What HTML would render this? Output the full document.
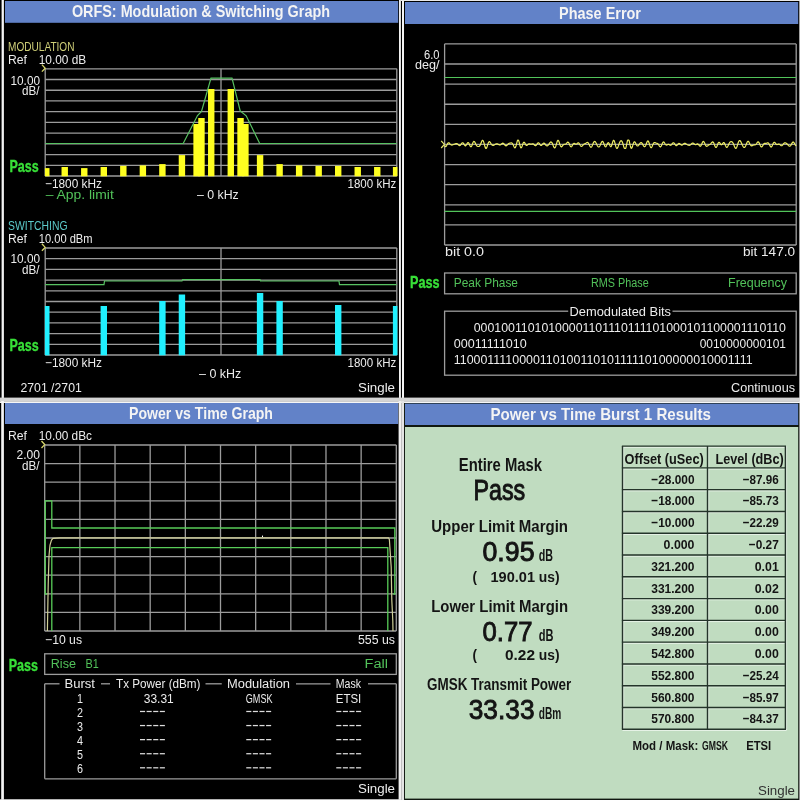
<!DOCTYPE html>
<html><head><meta charset="utf-8"><title>GSM Measurements</title>
<style>
html,body{margin:0;padding:0;background:#000;}
svg{display:block;will-change:transform;font-family:"Liberation Sans",sans-serif;}
text{white-space:pre;}
</style></head><body>
<svg width="800" height="800" viewBox="0 0 800 800">
<rect x="0.00" y="0.00" width="800.00" height="800.00" fill="#000"/>
<rect x="1.60" y="0.00" width="2.30" height="400.00" fill="#f4f4f4"/>
<rect x="5.00" y="1.00" width="393.20" height="21.80" fill="#6282c8"/>
<rect x="399.00" y="0.00" width="1.90" height="400.00" fill="#f0f0f0"/>
<rect x="0.00" y="397.60" width="401.00" height="3.60" fill="#d4d4d4"/>
<rect x="402.00" y="0.00" width="2.00" height="400.00" fill="#f4f4f4"/>
<rect x="401.00" y="0.00" width="399.00" height="1.00" fill="#e8e8e8"/>
<rect x="405.00" y="2.00" width="393.20" height="22.00" fill="#6282c8"/>
<rect x="799.30" y="0.00" width="0.70" height="400.00" fill="#e8e8e8"/>
<rect x="401.00" y="397.60" width="399.00" height="3.60" fill="#d4d4d4"/>
<rect x="1.20" y="401.00" width="2.70" height="399.00" fill="#f4f4f4"/>
<rect x="0.00" y="401.20" width="800.00" height="1.80" fill="#f6f6f6"/>
<rect x="5.00" y="403.00" width="393.20" height="21.00" fill="#6282c8"/>
<rect x="398.60" y="401.00" width="2.60" height="399.00" fill="#f0f0f0"/>
<rect x="0.00" y="799.20" width="401.00" height="0.80" fill="#e0e0e0"/>
<rect x="401.20" y="401.00" width="3.00" height="399.00" fill="#e4e4e4"/>
<rect x="404.20" y="403.00" width="395.00" height="397.00" fill="#101810"/>
<rect x="405.00" y="403.60" width="393.20" height="21.40" fill="#6282c8"/>
<rect x="405.00" y="427.00" width="393.20" height="371.60" fill="#c0dcc0"/>
<rect x="799.40" y="401.00" width="0.60" height="399.00" fill="#e8e8e8"/>
<text x="71.90" y="17.20" font-size="17.1" fill="#f4f4f4" font-weight="bold" textLength="258.10" lengthAdjust="spacingAndGlyphs" >ORFS: Modulation &amp; Switching Graph</text>
<text x="8.00" y="50.80" font-size="13" fill="#cfcf78" textLength="66.50" lengthAdjust="spacingAndGlyphs" >MODULATION</text>
<text x="8.00" y="64.00" font-size="12.3" fill="#ececec" textLength="19.00" lengthAdjust="spacingAndGlyphs" >Ref</text>
<text x="38.75" y="64.00" font-size="12.3" fill="#ececec" textLength="47.50" lengthAdjust="spacingAndGlyphs" >10.00 dB</text>
<text x="10.50" y="84.60" font-size="12.3" fill="#ececec" textLength="29.50" lengthAdjust="spacingAndGlyphs" >10.00</text>
<text x="22.00" y="95.00" font-size="12.3" fill="#ececec" textLength="17.50" lengthAdjust="spacingAndGlyphs" >dB/</text>
<line x1="45.20" y1="68.80" x2="396.80" y2="68.80" stroke="#9c9c9c" stroke-width="1.3"/>
<line x1="45.20" y1="79.52" x2="396.80" y2="79.52" stroke="#9c9c9c" stroke-width="1.3"/>
<line x1="45.20" y1="90.24" x2="396.80" y2="90.24" stroke="#9c9c9c" stroke-width="1.3"/>
<line x1="45.20" y1="100.96" x2="396.80" y2="100.96" stroke="#9c9c9c" stroke-width="1.3"/>
<line x1="45.20" y1="111.68" x2="396.80" y2="111.68" stroke="#9c9c9c" stroke-width="1.3"/>
<line x1="45.20" y1="122.40" x2="396.80" y2="122.40" stroke="#9c9c9c" stroke-width="1.3"/>
<line x1="45.20" y1="133.12" x2="396.80" y2="133.12" stroke="#9c9c9c" stroke-width="1.3"/>
<line x1="45.20" y1="143.84" x2="396.80" y2="143.84" stroke="#9c9c9c" stroke-width="1.3"/>
<line x1="45.20" y1="154.56" x2="396.80" y2="154.56" stroke="#9c9c9c" stroke-width="1.3"/>
<line x1="45.20" y1="165.28" x2="396.80" y2="165.28" stroke="#9c9c9c" stroke-width="1.3"/>
<line x1="45.20" y1="176.00" x2="396.80" y2="176.00" stroke="#9c9c9c" stroke-width="1.3"/>
<line x1="45.20" y1="68.80" x2="45.20" y2="176.00" stroke="#9c9c9c" stroke-width="1.3"/>
<line x1="396.80" y1="68.80" x2="396.80" y2="176.00" stroke="#9c9c9c" stroke-width="1.3"/>
<line x1="221.00" y1="68.80" x2="221.00" y2="176.00" stroke="#9c9c9c" stroke-width="1.3"/>
<rect x="208.03" y="89.00" width="6.40" height="87.30" fill="#ffff20"/>
<rect x="227.57" y="89.00" width="6.40" height="87.30" fill="#ffff20"/>
<rect x="198.27" y="118.00" width="6.40" height="58.30" fill="#ffff20"/>
<rect x="237.33" y="118.00" width="6.40" height="58.30" fill="#ffff20"/>
<rect x="193.38" y="124.00" width="6.40" height="52.30" fill="#ffff20"/>
<rect x="242.22" y="124.00" width="6.40" height="52.30" fill="#ffff20"/>
<rect x="178.73" y="155.10" width="6.40" height="21.20" fill="#ffff20"/>
<rect x="256.87" y="155.10" width="6.40" height="21.20" fill="#ffff20"/>
<rect x="159.20" y="164.10" width="6.40" height="12.20" fill="#ffff20"/>
<rect x="276.40" y="164.10" width="6.40" height="12.20" fill="#ffff20"/>
<rect x="139.67" y="165.40" width="6.40" height="10.90" fill="#ffff20"/>
<rect x="295.93" y="165.40" width="6.40" height="10.90" fill="#ffff20"/>
<rect x="120.13" y="165.90" width="6.40" height="10.40" fill="#ffff20"/>
<rect x="315.47" y="165.90" width="6.40" height="10.40" fill="#ffff20"/>
<rect x="100.60" y="167.00" width="6.40" height="9.30" fill="#ffff20"/>
<rect x="335.00" y="165.90" width="6.40" height="10.40" fill="#ffff20"/>
<rect x="81.07" y="168.10" width="6.40" height="8.20" fill="#ffff20"/>
<rect x="354.53" y="167.00" width="6.40" height="9.30" fill="#ffff20"/>
<rect x="61.53" y="167.00" width="6.40" height="9.30" fill="#ffff20"/>
<rect x="374.07" y="167.00" width="6.40" height="9.30" fill="#ffff20"/>
<rect x="44.90" y="168.10" width="4.60" height="8.20" fill="#ffff20"/>
<rect x="392.90" y="167.00" width="4.50" height="9.30" fill="#ffff20"/>
<path d="M45.2,143.5 L183.2,143.5 L197.5,115.6 L201.5,111.4 L211.0,78.2 L232.0,78.2 L240.2,111.0 L246.2,115.8 L259.7,143.5 L396.8,143.5" stroke="#58c262" stroke-width="1.2" fill="none" />
<path d="M41.9,64.6 L45.2,68.2 L41.9,71.6" stroke="#d6d66a" stroke-width="1.3" fill="none" />
<text x="9.50" y="172.00" font-size="16.5" fill="#38e038" font-weight="bold" textLength="29.25" lengthAdjust="spacingAndGlyphs" stroke="#38e038" stroke-width="0.35">Pass</text>
<text x="45.00" y="188.00" font-size="12.3" fill="#ececec" textLength="57.00" lengthAdjust="spacingAndGlyphs" >−1800 kHz</text>
<text x="347.50" y="188.00" font-size="12.3" fill="#ececec" textLength="48.75" lengthAdjust="spacingAndGlyphs" >1800 kHz</text>
<text x="45.75" y="198.60" font-size="12.3" fill="#52c25a" textLength="68.00" lengthAdjust="spacingAndGlyphs" >– App. limit</text>
<text x="197.00" y="198.80" font-size="12.3" fill="#ececec" textLength="41.75" lengthAdjust="spacingAndGlyphs" >– 0 kHz</text>
<text x="8.00" y="230.00" font-size="13" fill="#5ccaca" textLength="59.50" lengthAdjust="spacingAndGlyphs" >SWITCHING</text>
<text x="8.00" y="243.20" font-size="12.3" fill="#ececec" textLength="19.00" lengthAdjust="spacingAndGlyphs" >Ref</text>
<text x="38.75" y="243.20" font-size="12.3" fill="#ececec" textLength="53.75" lengthAdjust="spacingAndGlyphs" >10.00 dBm</text>
<text x="10.50" y="263.40" font-size="12.3" fill="#ececec" textLength="29.50" lengthAdjust="spacingAndGlyphs" >10.00</text>
<text x="22.00" y="274.00" font-size="12.3" fill="#ececec" textLength="17.50" lengthAdjust="spacingAndGlyphs" >dB/</text>
<line x1="45.20" y1="248.00" x2="396.80" y2="248.00" stroke="#9c9c9c" stroke-width="1.3"/>
<line x1="45.20" y1="258.70" x2="396.80" y2="258.70" stroke="#9c9c9c" stroke-width="1.3"/>
<line x1="45.20" y1="269.40" x2="396.80" y2="269.40" stroke="#9c9c9c" stroke-width="1.3"/>
<line x1="45.20" y1="280.10" x2="396.80" y2="280.10" stroke="#9c9c9c" stroke-width="1.3"/>
<line x1="45.20" y1="290.80" x2="396.80" y2="290.80" stroke="#9c9c9c" stroke-width="1.3"/>
<line x1="45.20" y1="301.50" x2="396.80" y2="301.50" stroke="#9c9c9c" stroke-width="1.3"/>
<line x1="45.20" y1="312.20" x2="396.80" y2="312.20" stroke="#9c9c9c" stroke-width="1.3"/>
<line x1="45.20" y1="322.90" x2="396.80" y2="322.90" stroke="#9c9c9c" stroke-width="1.3"/>
<line x1="45.20" y1="333.60" x2="396.80" y2="333.60" stroke="#9c9c9c" stroke-width="1.3"/>
<line x1="45.20" y1="344.30" x2="396.80" y2="344.30" stroke="#9c9c9c" stroke-width="1.3"/>
<line x1="45.20" y1="355.00" x2="396.80" y2="355.00" stroke="#9c9c9c" stroke-width="1.3"/>
<line x1="45.20" y1="248.00" x2="45.20" y2="355.00" stroke="#9c9c9c" stroke-width="1.3"/>
<line x1="396.80" y1="248.00" x2="396.80" y2="355.00" stroke="#9c9c9c" stroke-width="1.3"/>
<line x1="221.00" y1="248.00" x2="221.00" y2="355.00" stroke="#9c9c9c" stroke-width="1.3"/>
<rect x="178.73" y="294.50" width="6.40" height="60.80" fill="#20f0ff"/>
<rect x="256.87" y="293.00" width="6.40" height="62.30" fill="#20f0ff"/>
<rect x="159.20" y="301.00" width="6.40" height="54.30" fill="#20f0ff"/>
<rect x="276.40" y="301.00" width="6.40" height="54.30" fill="#20f0ff"/>
<rect x="100.60" y="306.00" width="6.40" height="49.30" fill="#20f0ff"/>
<rect x="335.00" y="305.00" width="6.40" height="50.30" fill="#20f0ff"/>
<rect x="44.90" y="306.00" width="4.60" height="49.30" fill="#20f0ff"/>
<rect x="392.90" y="306.00" width="4.50" height="49.30" fill="#20f0ff"/>
<path d="M45.2,284.6 L104.0,284.6 L104.5,281.0 L182.0,281.0 L182.5,279.6 L260.0,279.6 L260.5,281.0 L339.0,281.0 L339.5,284.6 L396.8,284.6" stroke="#58c262" stroke-width="1.2" fill="none" />
<path d="M41.9,243.8 L45.2,247.4 L41.9,250.8" stroke="#d6d66a" stroke-width="1.3" fill="none" />
<text x="9.50" y="350.50" font-size="16.5" fill="#38e038" font-weight="bold" textLength="29.25" lengthAdjust="spacingAndGlyphs" stroke="#38e038" stroke-width="0.35">Pass</text>
<text x="45.00" y="367.20" font-size="12.3" fill="#ececec" textLength="57.00" lengthAdjust="spacingAndGlyphs" >−1800 kHz</text>
<text x="347.50" y="367.20" font-size="12.3" fill="#ececec" textLength="48.75" lengthAdjust="spacingAndGlyphs" >1800 kHz</text>
<text x="199.00" y="378.20" font-size="12.3" fill="#ececec" textLength="42.25" lengthAdjust="spacingAndGlyphs" >– 0 kHz</text>
<text x="20.50" y="392.20" font-size="12.3" fill="#ececec" textLength="61.25" lengthAdjust="spacingAndGlyphs" >2701 /2701</text>
<text x="358.00" y="391.60" font-size="12.3" fill="#ececec" textLength="37.00" lengthAdjust="spacingAndGlyphs" >Single</text>
<text x="559.00" y="18.70" font-size="17.1" fill="#f4f4f4" font-weight="bold" textLength="82.00" lengthAdjust="spacingAndGlyphs" >Phase Error</text>
<line x1="444.60" y1="43.90" x2="796.20" y2="43.90" stroke="#9c9c9c" stroke-width="1.3"/>
<line x1="444.60" y1="64.01" x2="796.20" y2="64.01" stroke="#9c9c9c" stroke-width="1.3"/>
<line x1="444.60" y1="84.12" x2="796.20" y2="84.12" stroke="#9c9c9c" stroke-width="1.3"/>
<line x1="444.60" y1="104.23" x2="796.20" y2="104.23" stroke="#9c9c9c" stroke-width="1.3"/>
<line x1="444.60" y1="124.34" x2="796.20" y2="124.34" stroke="#9c9c9c" stroke-width="1.3"/>
<line x1="444.60" y1="144.45" x2="796.20" y2="144.45" stroke="#9c9c9c" stroke-width="1.3"/>
<line x1="444.60" y1="164.56" x2="796.20" y2="164.56" stroke="#9c9c9c" stroke-width="1.3"/>
<line x1="444.60" y1="184.67" x2="796.20" y2="184.67" stroke="#9c9c9c" stroke-width="1.3"/>
<line x1="444.60" y1="204.78" x2="796.20" y2="204.78" stroke="#9c9c9c" stroke-width="1.3"/>
<line x1="444.60" y1="224.89" x2="796.20" y2="224.89" stroke="#9c9c9c" stroke-width="1.3"/>
<line x1="444.60" y1="245.00" x2="796.20" y2="245.00" stroke="#9c9c9c" stroke-width="1.3"/>
<line x1="444.60" y1="43.90" x2="444.60" y2="245.00" stroke="#9c9c9c" stroke-width="1.3"/>
<line x1="796.20" y1="43.90" x2="796.20" y2="245.00" stroke="#9c9c9c" stroke-width="1.3"/>
<line x1="444.60" y1="77.50" x2="796.20" y2="77.50" stroke="#52c45a" stroke-width="1.2"/>
<line x1="444.60" y1="211.30" x2="796.20" y2="211.30" stroke="#52c45a" stroke-width="1.2"/>
<path d="M444.6,145.68 L445.0,146.27 L445.4,146.58 L445.8,146.57 L446.2,146.20 L446.6,145.57 L447.0,144.80 L447.4,144.02 L447.8,143.35 L448.2,142.91 L448.6,142.73 L449.0,142.82 L449.4,143.13 L449.8,143.57 L450.2,144.06 L450.6,144.50 L451.0,144.83 L451.4,145.02 L451.8,145.08 L452.2,145.02 L452.6,144.89 L453.0,144.73 L453.4,144.56 L453.8,144.39 L454.2,144.24 L454.6,144.09 L455.0,143.94 L455.4,143.79 L455.8,143.66 L456.2,143.58 L456.6,143.57 L457.0,143.67 L457.4,143.89 L457.8,144.22 L458.2,144.61 L458.6,145.01 L459.0,145.35 L459.4,145.56 L459.8,145.57 L460.2,145.36 L460.6,144.96 L461.0,144.41 L461.4,143.81 L461.8,143.26 L462.2,142.88 L462.6,142.74 L463.0,142.88 L463.4,143.29 L463.8,143.89 L464.2,144.58 L464.6,145.21 L465.0,145.66 L465.4,145.83 L465.8,145.67 L466.2,145.21 L466.6,144.53 L467.0,143.77 L467.4,143.10 L467.8,142.67 L468.2,142.58 L468.6,142.88 L469.0,143.53 L469.4,144.40 L469.8,145.34 L470.2,146.15 L470.6,146.67 L471.0,146.77 L471.4,146.44 L471.8,145.70 L472.2,144.70 L472.6,143.60 L473.0,142.59 L473.4,141.84 L473.8,141.46 L474.2,141.48 L474.6,141.88 L475.0,142.55 L475.4,143.36 L475.8,144.20 L476.2,144.95 L476.6,145.54 L477.0,145.97 L477.4,146.25 L477.8,146.41 L478.2,146.49 L478.6,146.50 L479.0,146.41 L479.4,146.20 L479.8,145.79 L480.2,145.18 L480.6,144.34 L481.0,143.33 L481.4,142.27 L481.8,141.30 L482.2,140.58 L482.6,140.27 L483.0,140.46 L483.4,141.17 L483.8,142.34 L484.2,143.81 L484.6,145.37 L485.0,146.80 L485.4,147.87 L485.8,148.45 L486.2,148.45 L486.6,147.91 L487.0,146.92 L487.4,145.68 L487.8,144.37 L488.2,143.18 L488.6,142.28 L489.0,141.75 L489.4,141.61 L489.8,141.82 L490.2,142.30 L490.6,142.94 L491.0,143.62 L491.4,144.25 L491.8,144.77 L492.2,145.13 L492.6,145.33 L493.0,145.39 L493.4,145.33 L493.8,145.18 L494.2,144.99 L494.6,144.75 L495.0,144.51 L495.4,144.27 L495.8,144.06 L496.2,143.90 L496.6,143.79 L497.0,143.77 L497.4,143.83 L497.8,143.97 L498.2,144.18 L498.6,144.42 L499.0,144.66 L499.4,144.83 L499.8,144.91 L500.2,144.86 L500.6,144.68 L501.0,144.39 L501.4,144.03 L501.8,143.67 L502.2,143.37 L502.6,143.20 L503.0,143.20 L503.4,143.39 L503.8,143.74 L504.2,144.22 L504.6,144.75 L505.0,145.24 L505.4,145.61 L505.8,145.80 L506.2,145.79 L506.6,145.59 L507.0,145.23 L507.4,144.80 L507.8,144.35 L508.2,143.95 L508.6,143.63 L509.0,143.41 L509.4,143.27 L509.8,143.18 L510.2,143.10 L510.6,143.03 L511.0,142.96 L511.4,142.94 L511.8,143.03 L512.2,143.29 L512.6,143.77 L513.0,144.47 L513.4,145.34 L513.8,146.27 L514.2,147.11 L514.6,147.67 L515.0,147.82 L515.4,147.46 L515.8,146.57 L516.2,145.25 L516.6,143.67 L517.0,142.09 L517.4,140.78 L517.8,140.10 L518.2,140.10 L518.6,140.45 L519.0,141.60 L519.4,143.14 L519.8,144.78 L520.2,146.25 L520.6,147.31 L521.0,147.80 L521.4,147.66 L521.8,146.97 L522.2,145.90 L522.6,144.68 L523.0,143.54 L523.4,142.69 L523.8,142.26 L524.2,142.27 L524.6,142.67 L525.0,143.34 L525.4,144.10 L525.8,144.78 L526.2,145.25 L526.6,145.45 L527.0,145.38 L527.4,145.10 L527.8,144.70 L528.2,144.31 L528.6,144.00 L529.0,143.84 L529.4,143.82 L529.8,143.91 L530.2,144.03 L530.6,144.13 L531.0,144.15 L531.4,144.08 L531.8,143.95 L532.2,143.82 L532.6,143.74 L533.0,143.79 L533.4,143.99 L533.8,144.33 L534.2,144.77 L534.6,145.20 L535.0,145.54 L535.4,145.70 L535.8,145.61 L536.2,145.29 L536.6,144.77 L537.0,144.15 L537.4,143.53 L537.8,143.06 L538.2,142.80 L538.6,142.83 L539.0,143.12 L539.4,143.61 L539.8,144.21 L540.2,144.79 L540.6,145.23 L541.0,145.45 L541.4,145.41 L541.8,145.12 L542.2,144.67 L542.6,144.13 L543.0,143.64 L543.4,143.28 L543.8,143.13 L544.2,143.21 L544.6,143.51 L545.0,143.98 L545.4,144.52 L545.8,145.06 L546.2,145.50 L546.6,145.79 L547.0,145.90 L547.4,145.80 L547.8,145.52 L548.2,145.10 L548.6,144.57 L549.0,143.98 L549.4,143.39 L549.8,142.83 L550.2,142.38 L550.6,142.06 L551.0,141.95 L551.4,142.08 L551.8,142.47 L552.2,143.12 L552.6,143.99 L553.0,145.00 L553.4,146.03 L553.8,146.96 L554.2,147.63 L554.6,147.92 L555.0,147.77 L555.4,147.15 L555.8,146.13 L556.2,144.82 L556.6,143.40 L557.0,142.08 L557.4,141.05 L557.8,140.46 L558.2,140.39 L558.6,140.83 L559.0,141.71 L559.4,142.87 L559.8,144.13 L560.2,145.28 L560.6,146.18 L561.0,146.72 L561.4,146.87 L561.8,146.68 L562.2,146.24 L562.6,145.68 L563.0,145.12 L563.4,144.68 L563.8,144.40 L564.2,144.27 L564.6,144.24 L565.0,144.24 L565.4,144.18 L565.8,143.99 L566.2,143.66 L566.6,143.22 L567.0,142.75 L567.4,142.36 L567.8,142.16 L568.2,142.24 L568.6,142.63 L569.0,143.31 L569.4,144.18 L569.8,145.12 L570.2,145.96 L570.6,146.56 L571.0,146.84 L571.4,146.74 L571.8,146.32 L572.2,145.66 L572.6,144.90 L573.0,144.20 L573.4,143.66 L573.8,143.37 L574.2,143.34 L574.6,143.50 L575.0,143.77 L575.4,144.03 L575.8,144.18 L576.2,144.16 L576.6,143.96 L577.0,143.63 L577.4,143.26 L577.8,142.95 L578.2,142.81 L578.6,142.92 L579.0,143.27 L579.4,143.84 L579.8,144.53 L580.2,145.23 L580.6,145.83 L581.0,146.22 L581.4,146.36 L581.8,146.25 L582.2,145.94 L582.6,145.50 L583.0,145.02 L583.4,144.58 L583.8,144.22 L584.2,143.96 L584.6,143.77 L585.0,143.61 L585.4,143.43 L585.8,143.22 L586.2,142.97 L586.6,142.71 L587.0,142.51 L587.4,142.43 L587.8,142.55 L588.2,142.89 L588.6,143.47 L589.0,144.24 L589.4,145.11 L589.8,145.97 L590.2,146.68 L590.6,147.15 L591.0,147.30 L591.4,147.09 L591.8,146.56 L592.2,145.75 L592.6,144.79 L593.0,143.79 L593.4,142.86 L593.8,142.12 L594.2,141.63 L594.6,141.44 L595.0,141.54 L595.4,141.92 L595.8,142.52 L596.2,143.27 L596.6,144.10 L597.0,144.94 L597.4,145.71 L597.8,146.34 L598.2,146.78 L598.6,146.99 L599.0,146.93 L599.4,146.59 L599.8,146.00 L600.2,145.20 L600.6,144.27 L601.0,143.31 L601.4,142.44 L601.8,141.77 L602.2,141.40 L602.6,141.41 L603.0,141.80 L603.4,142.54 L603.8,143.53 L604.2,144.61 L604.6,145.61 L605.0,146.38 L605.4,146.78 L605.8,146.74 L606.2,146.28 L606.6,145.49 L607.0,144.54 L607.4,143.62 L607.8,142.93 L608.2,142.63 L608.6,142.77 L609.0,143.35 L609.4,144.23 L609.8,145.22 L610.2,146.09 L610.6,146.61 L611.0,146.63 L611.4,146.10 L611.8,145.08 L612.2,143.73 L612.6,142.30 L613.0,141.13 L613.4,140.42 L613.8,140.31 L614.2,140.83 L614.6,141.90 L615.0,143.33 L615.4,144.91 L615.8,146.39 L616.2,147.55 L616.6,148.25 L617.0,148.44 L617.4,148.13 L617.8,147.41 L618.2,146.40 L618.6,145.26 L619.0,144.11 L619.4,143.05 L619.8,142.14 L620.2,141.43 L620.6,140.95 L621.0,140.72 L621.4,140.76 L621.8,141.10 L622.2,141.75 L622.6,142.71 L623.0,143.93 L623.4,145.32 L623.8,146.73 L624.2,147.98 L624.6,148.50 L625.0,148.50 L625.4,148.50 L625.8,148.06 L626.2,146.56 L626.6,144.67 L627.0,142.66 L627.4,140.84 L627.8,140.10 L628.2,140.10 L628.6,140.10 L629.0,140.21 L629.4,141.76 L629.8,143.61 L630.2,145.43 L630.6,146.95 L631.0,147.94 L631.4,148.28 L631.8,147.97 L632.2,147.12 L632.6,145.91 L633.0,144.57 L633.4,143.34 L633.8,142.40 L634.2,141.87 L634.6,141.79 L635.0,142.12 L635.4,142.77 L635.8,143.59 L636.2,144.44 L636.6,145.19 L637.0,145.73 L637.4,146.01 L637.8,146.00 L638.2,145.75 L638.6,145.29 L639.0,144.71 L639.4,144.09 L639.8,143.51 L640.2,143.03 L640.6,142.70 L641.0,142.58 L641.4,142.68 L641.8,142.99 L642.2,143.51 L642.6,144.16 L643.0,144.90 L643.4,145.63 L643.8,146.24 L644.2,146.65 L644.6,146.77 L645.0,146.55 L645.4,145.99 L645.8,145.13 L646.2,144.07 L646.6,142.96 L647.0,141.96 L647.4,141.24 L647.8,140.91 L648.2,141.06 L648.6,141.68 L649.0,142.68 L649.4,143.94 L649.8,145.24 L650.2,146.40 L650.6,147.25 L651.0,147.66 L651.4,147.59 L651.8,147.10 L652.2,146.28 L652.6,145.30 L653.0,144.32 L653.4,143.49 L653.8,142.90 L654.2,142.58 L654.6,142.51 L655.0,142.61 L655.4,142.79 L655.8,142.98 L656.2,143.13 L656.6,143.23 L657.0,143.32 L657.4,143.47 L657.8,143.73 L658.2,144.15 L658.6,144.72 L659.0,145.39 L659.4,146.05 L659.8,146.59 L660.2,146.88 L660.6,146.84 L661.0,146.44 L661.4,145.73 L661.8,144.79 L662.2,143.80 L662.6,142.91 L663.0,142.26 L663.4,141.96 L663.8,142.02 L664.2,142.41 L664.6,143.01 L665.0,143.70 L665.4,144.33 L665.8,144.80 L666.2,145.04 L666.6,145.06 L667.0,144.91 L667.4,144.69 L667.8,144.48 L668.2,144.36 L668.6,144.39 L669.0,144.56 L669.4,144.82 L669.8,145.08 L670.2,145.27 L670.6,145.30 L671.0,145.13 L671.4,144.77 L671.8,144.27 L672.2,143.71 L672.6,143.20 L673.0,142.85 L673.4,142.73 L673.8,142.86 L674.2,143.23 L674.6,143.77 L675.0,144.38 L675.4,144.95 L675.8,145.38 L676.2,145.60 L676.6,145.57 L677.0,145.31 L677.4,144.89 L677.8,144.40 L678.2,143.93 L678.6,143.59 L679.0,143.43 L679.4,143.48 L679.8,143.72 L680.2,144.09 L680.6,144.50 L681.0,144.86 L681.4,145.11 L681.8,145.18 L682.2,145.07 L682.6,144.79 L683.0,144.41 L683.4,144.01 L683.8,143.64 L684.2,143.38 L684.6,143.25 L685.0,143.28 L685.4,143.43 L685.8,143.68 L686.2,143.98 L686.6,144.28 L687.0,144.56 L687.4,144.81 L687.8,145.00 L688.2,145.15 L688.6,145.25 L689.0,145.30 L689.4,145.29 L689.8,145.20 L690.2,145.02 L690.6,144.74 L691.0,144.38 L691.4,143.98 L691.8,143.59 L692.2,143.27 L692.6,143.08 L693.0,143.06 L693.4,143.21 L693.8,143.50 L694.2,143.87 L694.6,144.25 L695.0,144.55 L695.4,144.70 L695.8,144.70 L696.2,144.55 L696.6,144.31 L697.0,144.08 L697.4,143.94 L697.8,143.97 L698.2,144.21 L698.6,144.63 L699.0,145.17 L699.4,145.70 L699.8,146.11 L700.2,146.28 L700.6,146.12 L701.0,145.63 L701.4,144.85 L701.8,143.90 L702.2,142.93 L702.6,142.10 L703.0,141.57 L703.4,141.41 L703.8,141.65 L704.2,142.25 L704.6,143.09 L705.0,144.04 L705.4,144.94 L705.8,145.66 L706.2,146.14 L706.6,146.33 L707.0,146.27 L707.4,146.03 L707.8,145.70 L708.2,145.35 L708.6,145.05 L709.0,144.81 L709.4,144.62 L709.8,144.44 L710.2,144.22 L710.6,143.90 L711.0,143.48 L711.4,142.99 L711.8,142.49 L712.2,142.09 L712.6,141.89 L713.0,141.97 L713.4,142.39 L713.8,143.13 L714.2,144.11 L714.6,145.19 L715.0,146.22 L715.4,147.02 L715.8,147.45 L716.2,147.43 L716.6,146.97 L717.0,146.14 L717.4,145.09 L717.8,144.02 L718.2,143.10 L718.6,142.50 L719.0,142.28 L719.4,142.45 L719.8,142.92 L720.2,143.56 L720.6,144.18 L721.0,144.64 L721.4,144.81 L721.8,144.66 L722.2,144.24 L722.6,143.66 L723.0,143.08 L723.4,142.67 L723.8,142.56 L724.2,142.83 L724.6,143.45 L725.0,144.33 L725.4,145.32 L725.8,146.25 L726.2,146.96 L726.6,147.34 L727.0,147.33 L727.4,146.96 L727.8,146.30 L728.2,145.46 L728.6,144.56 L729.0,143.70 L729.4,142.98 L729.8,142.42 L730.2,142.03 L730.6,141.79 L731.0,141.68 L731.4,141.68 L731.8,141.79 L732.2,142.03 L732.6,142.43 L733.0,143.01 L733.4,143.80 L733.8,144.75 L734.2,145.80 L734.6,146.81 L735.0,147.67 L735.4,148.25 L735.8,148.44 L736.2,148.21 L736.6,147.56 L737.0,146.56 L737.4,145.33 L737.8,144.02 L738.2,142.78 L738.6,141.73 L739.0,140.99 L739.4,140.59 L739.8,140.55 L740.2,140.82 L740.6,141.36 L741.0,142.08 L741.4,142.93 L741.8,143.83 L742.2,144.73 L742.6,145.59 L743.0,146.34 L743.4,146.95 L743.8,147.36 L744.2,147.52 L744.6,147.41 L745.0,147.01 L745.4,146.35 L745.8,145.47 L746.2,144.46 L746.6,143.43 L747.0,142.51 L747.4,141.81 L747.8,141.40 L748.2,141.34 L748.6,141.61 L749.0,142.17 L749.4,142.92 L749.8,143.75 L750.2,144.53 L750.6,145.18 L751.0,145.62 L751.4,145.83 L751.8,145.83 L752.2,145.69 L752.6,145.46 L753.0,145.24 L753.4,145.06 L753.8,144.97 L754.2,144.94 L754.6,144.94 L755.0,144.90 L755.4,144.76 L755.8,144.48 L756.2,144.04 L756.6,143.49 L757.0,142.88 L757.4,142.34 L757.8,141.95 L758.2,141.84 L758.6,142.04 L759.0,142.57 L759.4,143.37 L759.8,144.33 L760.2,145.32 L760.6,146.17 L761.0,146.77 L761.4,147.02 L761.8,146.92 L762.2,146.51 L762.6,145.88 L763.0,145.15 L763.4,144.45 L763.8,143.89 L764.2,143.51 L764.6,143.32 L765.0,143.28 L765.4,143.32 L765.8,143.35 L766.2,143.33 L766.6,143.21 L767.0,143.04 L767.4,142.88 L767.8,142.80 L768.2,142.90 L768.6,143.23 L769.0,143.79 L769.4,144.55 L769.8,145.39 L770.2,146.18 L770.6,146.77 L771.0,147.06 L771.4,146.97 L771.8,146.51 L772.2,145.76 L772.6,144.83 L773.0,143.88 L773.4,143.07 L773.8,142.52 L774.2,142.29 L774.6,142.38 L775.0,142.73 L775.4,143.23 L775.8,143.76 L776.2,144.21 L776.6,144.49 L777.0,144.59 L777.4,144.53 L777.8,144.36 L778.2,144.18 L778.6,144.06 L779.0,144.07 L779.4,144.24 L779.8,144.54 L780.2,144.92 L780.6,145.30 L781.0,145.59 L781.4,145.73 L781.8,145.67 L782.2,145.42 L782.6,145.01 L783.0,144.50 L783.4,143.96 L783.8,143.47 L784.2,143.09 L784.6,142.84 L785.0,142.74 L785.4,142.78 L785.8,142.94 L786.2,143.19 L786.6,143.51 L787.0,143.88 L787.4,144.29 L787.8,144.73 L788.2,145.17 L788.6,145.58 L789.0,145.93 L789.4,146.15 L789.8,146.20 L790.2,146.04 L790.6,145.66 L791.0,145.08 L791.4,144.36 L791.8,143.59 L792.2,142.88 L792.6,142.34 L793.0,142.06 L793.4,142.09 L793.8,142.41 L794.2,142.99 L794.6,143.71 L795.0,144.46 L795.4,145.12 L795.8,145.59 L796.2,145.82" stroke="#eeee62" stroke-width="1.2" fill="none" stroke-linejoin="round"/>
<path d="M441.2,140.8 L444.4,144.4 L441.2,148" stroke="#e6e66c" stroke-width="1.2" fill="none" />
<text x="424.00" y="59.40" font-size="12.3" fill="#ececec" textLength="15.50" lengthAdjust="spacingAndGlyphs" >6.0</text>
<text x="415.00" y="68.60" font-size="12.3" fill="#ececec" textLength="24.50" lengthAdjust="spacingAndGlyphs" >deg/</text>
<text x="445.00" y="256.20" font-size="12.3" fill="#ececec" textLength="39.00" lengthAdjust="spacingAndGlyphs" >bit 0.0</text>
<text x="743.00" y="256.20" font-size="12.3" fill="#ececec" textLength="52.00" lengthAdjust="spacingAndGlyphs" >bit 147.0</text>
<text x="410.00" y="287.60" font-size="16.5" fill="#38e038" font-weight="bold" textLength="29.50" lengthAdjust="spacingAndGlyphs" stroke="#38e038" stroke-width="0.35">Pass</text>
<rect x="444.60" y="273.00" width="351.60" height="20.80" fill="none" stroke="#9c9c9c" stroke-width="1.3"/>
<text x="453.75" y="287.40" font-size="12.3" fill="#52c25a" textLength="64.25" lengthAdjust="spacingAndGlyphs" >Peak Phase</text>
<text x="591.00" y="287.40" font-size="12.3" fill="#52c25a" textLength="57.75" lengthAdjust="spacingAndGlyphs" >RMS Phase</text>
<text x="728.00" y="287.20" font-size="12.3" fill="#52c25a" textLength="59.00" lengthAdjust="spacingAndGlyphs" >Frequency</text>
<rect x="444.60" y="311.20" width="351.60" height="64.00" fill="none" stroke="#9c9c9c" stroke-width="1.3"/>
<rect x="568.20" y="305.00" width="104.30" height="12.00" fill="#000"/>
<text x="569.50" y="316.00" font-size="12.3" fill="#ececec" textLength="101.50" lengthAdjust="spacingAndGlyphs" >Demodulated Bits</text>
<text x="473.75" y="332.20" font-size="12.3" fill="#ececec" textLength="312.17" lengthAdjust="spacingAndGlyphs" >00010011010100001101110111101000101100001110110</text>
<text x="453.75" y="348.20" font-size="12.3" fill="#ececec" textLength="73.06" lengthAdjust="spacingAndGlyphs" >00011111010</text>
<text x="699.65" y="348.20" font-size="12.3" fill="#ececec" textLength="86.35" lengthAdjust="spacingAndGlyphs" >0010000000101</text>
<text x="453.75" y="364.20" font-size="12.3" fill="#ececec" textLength="298.89" lengthAdjust="spacingAndGlyphs" >110001111000011010011010111110100000010001111</text>
<text x="731.00" y="392.40" font-size="12.3" fill="#ececec" textLength="64.00" lengthAdjust="spacingAndGlyphs" >Continuous</text>
<text x="129.00" y="418.70" font-size="17.1" fill="#f4f4f4" font-weight="bold" textLength="144.00" lengthAdjust="spacingAndGlyphs" >Power vs Time Graph</text>
<text x="8.00" y="439.60" font-size="12.3" fill="#ececec" textLength="19.00" lengthAdjust="spacingAndGlyphs" >Ref</text>
<text x="38.75" y="439.60" font-size="12.3" fill="#ececec" textLength="53.25" lengthAdjust="spacingAndGlyphs" >10.00 dBc</text>
<line x1="44.70" y1="445.00" x2="396.30" y2="445.00" stroke="#9c9c9c" stroke-width="1.3"/>
<line x1="44.70" y1="445.00" x2="44.70" y2="631.00" stroke="#9c9c9c" stroke-width="1.3"/>
<line x1="44.70" y1="463.60" x2="396.30" y2="463.60" stroke="#9c9c9c" stroke-width="1.3"/>
<line x1="79.86" y1="445.00" x2="79.86" y2="631.00" stroke="#9c9c9c" stroke-width="1.3"/>
<line x1="44.70" y1="482.20" x2="396.30" y2="482.20" stroke="#9c9c9c" stroke-width="1.3"/>
<line x1="115.02" y1="445.00" x2="115.02" y2="631.00" stroke="#9c9c9c" stroke-width="1.3"/>
<line x1="44.70" y1="500.80" x2="396.30" y2="500.80" stroke="#9c9c9c" stroke-width="1.3"/>
<line x1="150.18" y1="445.00" x2="150.18" y2="631.00" stroke="#9c9c9c" stroke-width="1.3"/>
<line x1="44.70" y1="519.40" x2="396.30" y2="519.40" stroke="#9c9c9c" stroke-width="1.3"/>
<line x1="185.34" y1="445.00" x2="185.34" y2="631.00" stroke="#9c9c9c" stroke-width="1.3"/>
<line x1="44.70" y1="538.00" x2="396.30" y2="538.00" stroke="#9c9c9c" stroke-width="1.3"/>
<line x1="220.50" y1="445.00" x2="220.50" y2="631.00" stroke="#9c9c9c" stroke-width="1.3"/>
<line x1="44.70" y1="556.60" x2="396.30" y2="556.60" stroke="#9c9c9c" stroke-width="1.3"/>
<line x1="255.66" y1="445.00" x2="255.66" y2="631.00" stroke="#9c9c9c" stroke-width="1.3"/>
<line x1="44.70" y1="575.20" x2="396.30" y2="575.20" stroke="#9c9c9c" stroke-width="1.3"/>
<line x1="290.82" y1="445.00" x2="290.82" y2="631.00" stroke="#9c9c9c" stroke-width="1.3"/>
<line x1="44.70" y1="593.80" x2="396.30" y2="593.80" stroke="#9c9c9c" stroke-width="1.3"/>
<line x1="325.98" y1="445.00" x2="325.98" y2="631.00" stroke="#9c9c9c" stroke-width="1.3"/>
<line x1="44.70" y1="612.40" x2="396.30" y2="612.40" stroke="#9c9c9c" stroke-width="1.3"/>
<line x1="361.14" y1="445.00" x2="361.14" y2="631.00" stroke="#9c9c9c" stroke-width="1.3"/>
<line x1="44.70" y1="631.00" x2="396.30" y2="631.00" stroke="#9c9c9c" stroke-width="1.3"/>
<line x1="396.30" y1="445.00" x2="396.30" y2="631.00" stroke="#9c9c9c" stroke-width="1.3"/>
<path d="M41.5,441 L44.7,444.6 L41.5,448" stroke="#d6d66a" stroke-width="1.3" fill="none" />
<text x="16.50" y="458.80" font-size="12.3" fill="#ececec" textLength="23.50" lengthAdjust="spacingAndGlyphs" >2.00</text>
<text x="22.00" y="469.60" font-size="12.3" fill="#ececec" textLength="17.50" lengthAdjust="spacingAndGlyphs" >dB/</text>
<path d="M47,594 L45.3,594 L45.3,500.8 L51.8,500.8 L51.8,528 L394.8,528 L394.8,594 L393.2,594" stroke="#58cc58" stroke-width="1.3" fill="none" />
<path d="M51.8,631.0 L51.8,547.6 L387.8,547.6 L387.8,631.0" stroke="#58cc58" stroke-width="1.3" fill="none" />
<path d="M47.4,631.0 L48.2,585 L49,556 L50,545 L51.5,540 L53,538.3 L60,537.8 L388.6,537.8 L389.4,539.7 L389.8,546 L391.2,567 L391.8,600 L392.8,621 L393,631.0" stroke="#cfcf96" stroke-width="1.2" fill="none" />
<rect x="262.00" y="535.60" width="1.00" height="1.40" fill="#fff"/>
<text x="45.00" y="644.20" font-size="12.3" fill="#ececec" textLength="37.00" lengthAdjust="spacingAndGlyphs" >−10 us</text>
<text x="358.00" y="644.20" font-size="12.3" fill="#ececec" textLength="37.00" lengthAdjust="spacingAndGlyphs" >555 us</text>
<text x="8.75" y="671.00" font-size="16.5" fill="#38e038" font-weight="bold" textLength="29.25" lengthAdjust="spacingAndGlyphs" stroke="#38e038" stroke-width="0.35">Pass</text>
<rect x="44.70" y="653.80" width="351.60" height="20.60" fill="none" stroke="#9c9c9c" stroke-width="1.3"/>
<text x="50.75" y="668.00" font-size="12.3" fill="#52c25a" textLength="25.25" lengthAdjust="spacingAndGlyphs" >Rise</text>
<text x="85.50" y="668.00" font-size="12.3" fill="#52c25a" textLength="13.25" lengthAdjust="spacingAndGlyphs" >B1</text>
<text x="364.50" y="668.00" font-size="12.3" fill="#52c25a" textLength="23.50" lengthAdjust="spacingAndGlyphs" >Fall</text>
<line x1="44.70" y1="683.80" x2="59.50" y2="683.80" stroke="#9c9c9c" stroke-width="1.3"/>
<line x1="101.00" y1="683.80" x2="110.00" y2="683.80" stroke="#9c9c9c" stroke-width="1.3"/>
<line x1="205.50" y1="683.80" x2="221.75" y2="683.80" stroke="#9c9c9c" stroke-width="1.3"/>
<line x1="296.00" y1="683.80" x2="330.50" y2="683.80" stroke="#9c9c9c" stroke-width="1.3"/>
<line x1="368.00" y1="683.80" x2="396.30" y2="683.80" stroke="#9c9c9c" stroke-width="1.3"/>
<line x1="44.70" y1="683.80" x2="44.70" y2="778.80" stroke="#9c9c9c" stroke-width="1.3"/>
<line x1="396.30" y1="683.80" x2="396.30" y2="778.80" stroke="#9c9c9c" stroke-width="1.3"/>
<line x1="44.70" y1="778.80" x2="396.30" y2="778.80" stroke="#9c9c9c" stroke-width="1.3"/>
<text x="64.50" y="688.00" font-size="12.3" fill="#ececec" textLength="30.50" lengthAdjust="spacingAndGlyphs" >Burst</text>
<text x="116.00" y="688.00" font-size="12.3" fill="#ececec" textLength="84.50" lengthAdjust="spacingAndGlyphs" >Tx Power (dBm)</text>
<text x="227.00" y="688.00" font-size="12.3" fill="#ececec" textLength="63.00" lengthAdjust="spacingAndGlyphs" >Modulation</text>
<text x="335.75" y="688.00" font-size="12.3" fill="#ececec" textLength="25.25" lengthAdjust="spacingAndGlyphs" >Mask</text>
<text x="77.00" y="702.60" font-size="12.3" fill="#ececec" textLength="6.00" lengthAdjust="spacingAndGlyphs" >1</text>
<text x="143.75" y="702.60" font-size="12.3" fill="#ececec" textLength="30.00" lengthAdjust="spacingAndGlyphs" >33.31</text>
<text x="245.75" y="702.60" font-size="12.3" fill="#ececec" textLength="26.75" lengthAdjust="spacingAndGlyphs" >GMSK</text>
<text x="335.75" y="702.60" font-size="12.3" fill="#ececec" textLength="25.50" lengthAdjust="spacingAndGlyphs" >ETSI</text>
<text x="77.00" y="716.68" font-size="12.3" fill="#ececec" textLength="6.00" lengthAdjust="spacingAndGlyphs" >2</text>
<line x1="140.00" y1="711.48" x2="145.10" y2="711.48" stroke="#dcdcdc" stroke-width="1.25"/>
<line x1="146.60" y1="711.48" x2="151.70" y2="711.48" stroke="#dcdcdc" stroke-width="1.25"/>
<line x1="153.20" y1="711.48" x2="158.30" y2="711.48" stroke="#dcdcdc" stroke-width="1.25"/>
<line x1="159.80" y1="711.48" x2="164.90" y2="711.48" stroke="#dcdcdc" stroke-width="1.25"/>
<line x1="246.25" y1="711.48" x2="251.35" y2="711.48" stroke="#dcdcdc" stroke-width="1.25"/>
<line x1="252.85" y1="711.48" x2="257.95" y2="711.48" stroke="#dcdcdc" stroke-width="1.25"/>
<line x1="259.45" y1="711.48" x2="264.55" y2="711.48" stroke="#dcdcdc" stroke-width="1.25"/>
<line x1="266.05" y1="711.48" x2="271.15" y2="711.48" stroke="#dcdcdc" stroke-width="1.25"/>
<line x1="336.25" y1="711.48" x2="341.35" y2="711.48" stroke="#dcdcdc" stroke-width="1.25"/>
<line x1="342.85" y1="711.48" x2="347.95" y2="711.48" stroke="#dcdcdc" stroke-width="1.25"/>
<line x1="349.45" y1="711.48" x2="354.55" y2="711.48" stroke="#dcdcdc" stroke-width="1.25"/>
<line x1="356.05" y1="711.48" x2="361.15" y2="711.48" stroke="#dcdcdc" stroke-width="1.25"/>
<text x="77.00" y="730.76" font-size="12.3" fill="#ececec" textLength="6.00" lengthAdjust="spacingAndGlyphs" >3</text>
<line x1="140.00" y1="725.56" x2="145.10" y2="725.56" stroke="#dcdcdc" stroke-width="1.25"/>
<line x1="146.60" y1="725.56" x2="151.70" y2="725.56" stroke="#dcdcdc" stroke-width="1.25"/>
<line x1="153.20" y1="725.56" x2="158.30" y2="725.56" stroke="#dcdcdc" stroke-width="1.25"/>
<line x1="159.80" y1="725.56" x2="164.90" y2="725.56" stroke="#dcdcdc" stroke-width="1.25"/>
<line x1="246.25" y1="725.56" x2="251.35" y2="725.56" stroke="#dcdcdc" stroke-width="1.25"/>
<line x1="252.85" y1="725.56" x2="257.95" y2="725.56" stroke="#dcdcdc" stroke-width="1.25"/>
<line x1="259.45" y1="725.56" x2="264.55" y2="725.56" stroke="#dcdcdc" stroke-width="1.25"/>
<line x1="266.05" y1="725.56" x2="271.15" y2="725.56" stroke="#dcdcdc" stroke-width="1.25"/>
<line x1="336.25" y1="725.56" x2="341.35" y2="725.56" stroke="#dcdcdc" stroke-width="1.25"/>
<line x1="342.85" y1="725.56" x2="347.95" y2="725.56" stroke="#dcdcdc" stroke-width="1.25"/>
<line x1="349.45" y1="725.56" x2="354.55" y2="725.56" stroke="#dcdcdc" stroke-width="1.25"/>
<line x1="356.05" y1="725.56" x2="361.15" y2="725.56" stroke="#dcdcdc" stroke-width="1.25"/>
<text x="77.00" y="744.84" font-size="12.3" fill="#ececec" textLength="6.00" lengthAdjust="spacingAndGlyphs" >4</text>
<line x1="140.00" y1="739.64" x2="145.10" y2="739.64" stroke="#dcdcdc" stroke-width="1.25"/>
<line x1="146.60" y1="739.64" x2="151.70" y2="739.64" stroke="#dcdcdc" stroke-width="1.25"/>
<line x1="153.20" y1="739.64" x2="158.30" y2="739.64" stroke="#dcdcdc" stroke-width="1.25"/>
<line x1="159.80" y1="739.64" x2="164.90" y2="739.64" stroke="#dcdcdc" stroke-width="1.25"/>
<line x1="246.25" y1="739.64" x2="251.35" y2="739.64" stroke="#dcdcdc" stroke-width="1.25"/>
<line x1="252.85" y1="739.64" x2="257.95" y2="739.64" stroke="#dcdcdc" stroke-width="1.25"/>
<line x1="259.45" y1="739.64" x2="264.55" y2="739.64" stroke="#dcdcdc" stroke-width="1.25"/>
<line x1="266.05" y1="739.64" x2="271.15" y2="739.64" stroke="#dcdcdc" stroke-width="1.25"/>
<line x1="336.25" y1="739.64" x2="341.35" y2="739.64" stroke="#dcdcdc" stroke-width="1.25"/>
<line x1="342.85" y1="739.64" x2="347.95" y2="739.64" stroke="#dcdcdc" stroke-width="1.25"/>
<line x1="349.45" y1="739.64" x2="354.55" y2="739.64" stroke="#dcdcdc" stroke-width="1.25"/>
<line x1="356.05" y1="739.64" x2="361.15" y2="739.64" stroke="#dcdcdc" stroke-width="1.25"/>
<text x="77.00" y="758.92" font-size="12.3" fill="#ececec" textLength="6.00" lengthAdjust="spacingAndGlyphs" >5</text>
<line x1="140.00" y1="753.72" x2="145.10" y2="753.72" stroke="#dcdcdc" stroke-width="1.25"/>
<line x1="146.60" y1="753.72" x2="151.70" y2="753.72" stroke="#dcdcdc" stroke-width="1.25"/>
<line x1="153.20" y1="753.72" x2="158.30" y2="753.72" stroke="#dcdcdc" stroke-width="1.25"/>
<line x1="159.80" y1="753.72" x2="164.90" y2="753.72" stroke="#dcdcdc" stroke-width="1.25"/>
<line x1="246.25" y1="753.72" x2="251.35" y2="753.72" stroke="#dcdcdc" stroke-width="1.25"/>
<line x1="252.85" y1="753.72" x2="257.95" y2="753.72" stroke="#dcdcdc" stroke-width="1.25"/>
<line x1="259.45" y1="753.72" x2="264.55" y2="753.72" stroke="#dcdcdc" stroke-width="1.25"/>
<line x1="266.05" y1="753.72" x2="271.15" y2="753.72" stroke="#dcdcdc" stroke-width="1.25"/>
<line x1="336.25" y1="753.72" x2="341.35" y2="753.72" stroke="#dcdcdc" stroke-width="1.25"/>
<line x1="342.85" y1="753.72" x2="347.95" y2="753.72" stroke="#dcdcdc" stroke-width="1.25"/>
<line x1="349.45" y1="753.72" x2="354.55" y2="753.72" stroke="#dcdcdc" stroke-width="1.25"/>
<line x1="356.05" y1="753.72" x2="361.15" y2="753.72" stroke="#dcdcdc" stroke-width="1.25"/>
<text x="77.00" y="773.00" font-size="12.3" fill="#ececec" textLength="6.00" lengthAdjust="spacingAndGlyphs" >6</text>
<line x1="140.00" y1="767.80" x2="145.10" y2="767.80" stroke="#dcdcdc" stroke-width="1.25"/>
<line x1="146.60" y1="767.80" x2="151.70" y2="767.80" stroke="#dcdcdc" stroke-width="1.25"/>
<line x1="153.20" y1="767.80" x2="158.30" y2="767.80" stroke="#dcdcdc" stroke-width="1.25"/>
<line x1="159.80" y1="767.80" x2="164.90" y2="767.80" stroke="#dcdcdc" stroke-width="1.25"/>
<line x1="246.25" y1="767.80" x2="251.35" y2="767.80" stroke="#dcdcdc" stroke-width="1.25"/>
<line x1="252.85" y1="767.80" x2="257.95" y2="767.80" stroke="#dcdcdc" stroke-width="1.25"/>
<line x1="259.45" y1="767.80" x2="264.55" y2="767.80" stroke="#dcdcdc" stroke-width="1.25"/>
<line x1="266.05" y1="767.80" x2="271.15" y2="767.80" stroke="#dcdcdc" stroke-width="1.25"/>
<line x1="336.25" y1="767.80" x2="341.35" y2="767.80" stroke="#dcdcdc" stroke-width="1.25"/>
<line x1="342.85" y1="767.80" x2="347.95" y2="767.80" stroke="#dcdcdc" stroke-width="1.25"/>
<line x1="349.45" y1="767.80" x2="354.55" y2="767.80" stroke="#dcdcdc" stroke-width="1.25"/>
<line x1="356.05" y1="767.80" x2="361.15" y2="767.80" stroke="#dcdcdc" stroke-width="1.25"/>
<text x="358.00" y="793.10" font-size="12.3" fill="#ececec" textLength="37.00" lengthAdjust="spacingAndGlyphs" >Single</text>
<text x="490.50" y="420.00" font-size="17.1" fill="#f4f4f4" font-weight="bold" textLength="220.50" lengthAdjust="spacingAndGlyphs" >Power vs Time Burst 1 Results</text>
<text x="458.75" y="470.60" font-size="17.6" fill="#141414" font-weight="bold" textLength="83.25" lengthAdjust="spacingAndGlyphs" >Entire Mask</text>
<text x="473.50" y="500.00" font-size="28.6" fill="#141414" textLength="51.75" lengthAdjust="spacingAndGlyphs" stroke="#141414" stroke-width="1.0">Pass</text>
<text x="431.25" y="532.20" font-size="17.4" fill="#141414" font-weight="bold" textLength="136.75" lengthAdjust="spacingAndGlyphs" >Upper Limit Margin</text>
<text x="482.50" y="561.40" font-size="27.2" fill="#141414" textLength="52.00" lengthAdjust="spacingAndGlyphs" stroke="#141414" stroke-width="0.9">0.95</text>
<text x="538.75" y="561.30" font-size="17" fill="#141414" font-weight="bold" textLength="14.25" lengthAdjust="spacingAndGlyphs" >dB</text>
<text x="472.50" y="581.80" font-size="15.5" fill="#141414" font-weight="bold" textLength="4.50" lengthAdjust="spacingAndGlyphs" >(</text>
<text x="490.50" y="581.80" font-size="15.5" fill="#141414" font-weight="bold" textLength="44.50" lengthAdjust="spacingAndGlyphs" >190.01</text>
<text x="538.75" y="581.80" font-size="15.5" fill="#141414" font-weight="bold" textLength="20.75" lengthAdjust="spacingAndGlyphs" >us)</text>
<text x="431.25" y="611.80" font-size="17.4" fill="#141414" font-weight="bold" textLength="136.75" lengthAdjust="spacingAndGlyphs" >Lower Limit Margin</text>
<text x="482.50" y="640.90" font-size="27.2" fill="#141414" textLength="50.00" lengthAdjust="spacingAndGlyphs" stroke="#141414" stroke-width="0.9">0.77</text>
<text x="538.75" y="641.30" font-size="17" fill="#141414" font-weight="bold" textLength="14.75" lengthAdjust="spacingAndGlyphs" >dB</text>
<text x="472.50" y="660.30" font-size="15.5" fill="#141414" font-weight="bold" textLength="4.50" lengthAdjust="spacingAndGlyphs" >(</text>
<text x="505.00" y="660.30" font-size="15.5" fill="#141414" font-weight="bold" textLength="30.00" lengthAdjust="spacingAndGlyphs" >0.22</text>
<text x="538.75" y="660.30" font-size="15.5" fill="#141414" font-weight="bold" textLength="20.75" lengthAdjust="spacingAndGlyphs" >us)</text>
<text x="427.00" y="689.50" font-size="17.4" fill="#141414" font-weight="bold" textLength="144.25" lengthAdjust="spacingAndGlyphs" >GMSK Transmit Power</text>
<text x="468.75" y="719.00" font-size="27.2" fill="#141414" textLength="65.75" lengthAdjust="spacingAndGlyphs" stroke="#141414" stroke-width="0.9">33.33</text>
<text x="538.75" y="719.20" font-size="17" fill="#141414" font-weight="bold" textLength="22.50" lengthAdjust="spacingAndGlyphs" >dBm</text>
<line x1="622.50" y1="447.30" x2="786.40" y2="447.30" stroke="#e6f2e6" stroke-width="1.0"/>
<line x1="622.50" y1="469.08" x2="786.40" y2="469.08" stroke="#e6f2e6" stroke-width="1.0"/>
<line x1="622.50" y1="490.87" x2="786.40" y2="490.87" stroke="#e6f2e6" stroke-width="1.0"/>
<line x1="622.50" y1="512.65" x2="786.40" y2="512.65" stroke="#e6f2e6" stroke-width="1.0"/>
<line x1="622.50" y1="534.44" x2="786.40" y2="534.44" stroke="#e6f2e6" stroke-width="1.0"/>
<line x1="622.50" y1="556.22" x2="786.40" y2="556.22" stroke="#e6f2e6" stroke-width="1.0"/>
<line x1="622.50" y1="578.01" x2="786.40" y2="578.01" stroke="#e6f2e6" stroke-width="1.0"/>
<line x1="622.50" y1="599.79" x2="786.40" y2="599.79" stroke="#e6f2e6" stroke-width="1.0"/>
<line x1="622.50" y1="621.58" x2="786.40" y2="621.58" stroke="#e6f2e6" stroke-width="1.0"/>
<line x1="622.50" y1="643.36" x2="786.40" y2="643.36" stroke="#e6f2e6" stroke-width="1.0"/>
<line x1="622.50" y1="665.15" x2="786.40" y2="665.15" stroke="#e6f2e6" stroke-width="1.0"/>
<line x1="622.50" y1="686.93" x2="786.40" y2="686.93" stroke="#e6f2e6" stroke-width="1.0"/>
<line x1="622.50" y1="708.72" x2="786.40" y2="708.72" stroke="#e6f2e6" stroke-width="1.0"/>
<line x1="622.50" y1="730.50" x2="786.40" y2="730.50" stroke="#e6f2e6" stroke-width="1.0"/>
<line x1="623.70" y1="446.10" x2="623.70" y2="730.30" stroke="#e6f2e6" stroke-width="1.0"/>
<line x1="708.70" y1="446.10" x2="708.70" y2="730.30" stroke="#e6f2e6" stroke-width="1.0"/>
<line x1="786.60" y1="446.10" x2="786.60" y2="730.30" stroke="#e6f2e6" stroke-width="1.0"/>
<line x1="621.90" y1="446.10" x2="786.00" y2="446.10" stroke="#24342a" stroke-width="1.4"/>
<line x1="621.90" y1="467.88" x2="786.00" y2="467.88" stroke="#24342a" stroke-width="1.4"/>
<line x1="621.90" y1="489.67" x2="786.00" y2="489.67" stroke="#24342a" stroke-width="1.4"/>
<line x1="621.90" y1="511.45" x2="786.00" y2="511.45" stroke="#24342a" stroke-width="1.4"/>
<line x1="621.90" y1="533.24" x2="786.00" y2="533.24" stroke="#24342a" stroke-width="1.4"/>
<line x1="621.90" y1="555.02" x2="786.00" y2="555.02" stroke="#24342a" stroke-width="1.4"/>
<line x1="621.90" y1="576.81" x2="786.00" y2="576.81" stroke="#24342a" stroke-width="1.4"/>
<line x1="621.90" y1="598.59" x2="786.00" y2="598.59" stroke="#24342a" stroke-width="1.4"/>
<line x1="621.90" y1="620.38" x2="786.00" y2="620.38" stroke="#24342a" stroke-width="1.4"/>
<line x1="621.90" y1="642.16" x2="786.00" y2="642.16" stroke="#24342a" stroke-width="1.4"/>
<line x1="621.90" y1="663.95" x2="786.00" y2="663.95" stroke="#24342a" stroke-width="1.4"/>
<line x1="621.90" y1="685.73" x2="786.00" y2="685.73" stroke="#24342a" stroke-width="1.4"/>
<line x1="621.90" y1="707.52" x2="786.00" y2="707.52" stroke="#24342a" stroke-width="1.4"/>
<line x1="621.90" y1="729.30" x2="786.00" y2="729.30" stroke="#24342a" stroke-width="1.4"/>
<line x1="622.50" y1="446.10" x2="622.50" y2="729.30" stroke="#24342a" stroke-width="1.4"/>
<line x1="707.50" y1="446.10" x2="707.50" y2="729.30" stroke="#24342a" stroke-width="1.4"/>
<line x1="785.40" y1="446.10" x2="785.40" y2="729.30" stroke="#24342a" stroke-width="1.4"/>
<text x="624.50" y="463.60" font-size="14.4" fill="#141414" font-weight="bold" textLength="79.25" lengthAdjust="spacingAndGlyphs" >Offset (uSec)</text>
<text x="715.50" y="463.60" font-size="14.4" fill="#141414" font-weight="bold" textLength="68.25" lengthAdjust="spacingAndGlyphs" >Level (dBc)</text>
<text x="651.24" y="483.68" font-size="13.4" fill="#141414" font-weight="bold" textLength="43.26" lengthAdjust="spacingAndGlyphs" >−28.000</text>
<text x="742.75" y="483.68" font-size="13.4" fill="#141414" font-weight="bold" textLength="36.00" lengthAdjust="spacingAndGlyphs" >−87.96</text>
<text x="651.24" y="505.47" font-size="13.4" fill="#141414" font-weight="bold" textLength="43.26" lengthAdjust="spacingAndGlyphs" >−18.000</text>
<text x="742.75" y="505.47" font-size="13.4" fill="#141414" font-weight="bold" textLength="36.00" lengthAdjust="spacingAndGlyphs" >−85.73</text>
<text x="651.24" y="527.25" font-size="13.4" fill="#141414" font-weight="bold" textLength="43.26" lengthAdjust="spacingAndGlyphs" >−10.000</text>
<text x="742.75" y="527.25" font-size="13.4" fill="#141414" font-weight="bold" textLength="36.00" lengthAdjust="spacingAndGlyphs" >−22.29</text>
<text x="663.60" y="549.04" font-size="13.4" fill="#141414" font-weight="bold" textLength="30.90" lengthAdjust="spacingAndGlyphs" >0.000</text>
<text x="748.75" y="549.04" font-size="13.4" fill="#141414" font-weight="bold" textLength="30.00" lengthAdjust="spacingAndGlyphs" >−0.27</text>
<text x="651.24" y="570.82" font-size="13.4" fill="#141414" font-weight="bold" textLength="43.26" lengthAdjust="spacingAndGlyphs" >321.200</text>
<text x="754.75" y="570.82" font-size="13.4" fill="#141414" font-weight="bold" textLength="24.00" lengthAdjust="spacingAndGlyphs" >0.01</text>
<text x="651.24" y="592.61" font-size="13.4" fill="#141414" font-weight="bold" textLength="43.26" lengthAdjust="spacingAndGlyphs" >331.200</text>
<text x="754.75" y="592.61" font-size="13.4" fill="#141414" font-weight="bold" textLength="24.00" lengthAdjust="spacingAndGlyphs" >0.02</text>
<text x="651.24" y="614.39" font-size="13.4" fill="#141414" font-weight="bold" textLength="43.26" lengthAdjust="spacingAndGlyphs" >339.200</text>
<text x="754.75" y="614.39" font-size="13.4" fill="#141414" font-weight="bold" textLength="24.00" lengthAdjust="spacingAndGlyphs" >0.00</text>
<text x="651.24" y="636.18" font-size="13.4" fill="#141414" font-weight="bold" textLength="43.26" lengthAdjust="spacingAndGlyphs" >349.200</text>
<text x="754.75" y="636.18" font-size="13.4" fill="#141414" font-weight="bold" textLength="24.00" lengthAdjust="spacingAndGlyphs" >0.00</text>
<text x="651.24" y="657.96" font-size="13.4" fill="#141414" font-weight="bold" textLength="43.26" lengthAdjust="spacingAndGlyphs" >542.800</text>
<text x="754.75" y="657.96" font-size="13.4" fill="#141414" font-weight="bold" textLength="24.00" lengthAdjust="spacingAndGlyphs" >0.00</text>
<text x="651.24" y="679.75" font-size="13.4" fill="#141414" font-weight="bold" textLength="43.26" lengthAdjust="spacingAndGlyphs" >552.800</text>
<text x="742.75" y="679.75" font-size="13.4" fill="#141414" font-weight="bold" textLength="36.00" lengthAdjust="spacingAndGlyphs" >−25.24</text>
<text x="651.24" y="701.53" font-size="13.4" fill="#141414" font-weight="bold" textLength="43.26" lengthAdjust="spacingAndGlyphs" >560.800</text>
<text x="742.75" y="701.53" font-size="13.4" fill="#141414" font-weight="bold" textLength="36.00" lengthAdjust="spacingAndGlyphs" >−85.97</text>
<text x="651.24" y="723.32" font-size="13.4" fill="#141414" font-weight="bold" textLength="43.26" lengthAdjust="spacingAndGlyphs" >570.800</text>
<text x="742.75" y="723.32" font-size="13.4" fill="#141414" font-weight="bold" textLength="36.00" lengthAdjust="spacingAndGlyphs" >−84.37</text>
<text x="632.50" y="750.00" font-size="13.4" fill="#141414" font-weight="bold" textLength="65.75" lengthAdjust="spacingAndGlyphs" >Mod / Mask:</text>
<text x="702.00" y="750.00" font-size="13.4" fill="#141414" font-weight="bold" textLength="26.00" lengthAdjust="spacingAndGlyphs" >GMSK</text>
<text x="746.25" y="750.00" font-size="13.4" fill="#141414" font-weight="bold" textLength="25.00" lengthAdjust="spacingAndGlyphs" >ETSI</text>
<text x="758.00" y="794.70" font-size="12.3" fill="#303030" textLength="37.00" lengthAdjust="spacingAndGlyphs" >Single</text>
</svg>
</body></html>
